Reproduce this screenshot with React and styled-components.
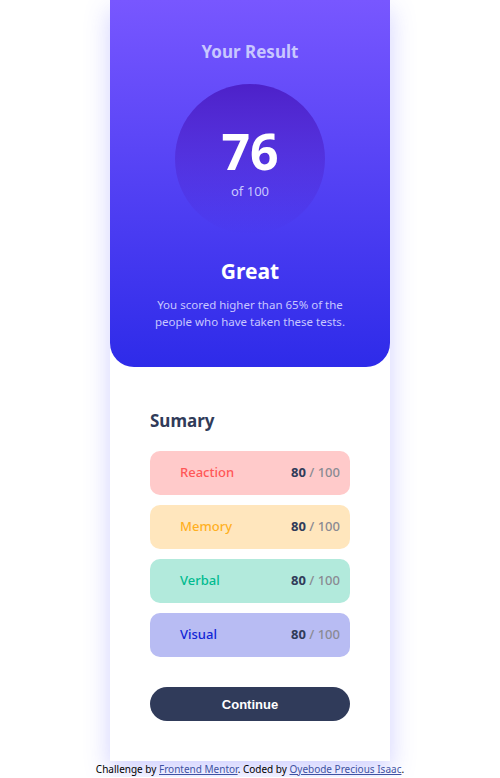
import styled, { createGlobalStyle } from 'styled-components';

const Global = createGlobalStyle`
  body {
    margin: 0;
    background: #fff;
    font-family: 'Noto Sans', 'Open Sans', sans-serif;
  }
`;

const Card = styled.main`
  width: 280px;
  margin: 0 auto;
  background: #fff;
  box-shadow: 0 10px 24px rgba(90, 90, 255, 0.28);
  padding-bottom: 40px;
`;

const Result = styled.section`
  height: 367px;
  box-sizing: border-box;
  padding-top: 38px;
  background: linear-gradient(180deg, #7857ff 0%, #2e2be9 100%);
  border-radius: 0 0 24px 24px;
  display: flex;
  flex-direction: column;
  align-items: center;
  color: #fff;
`;

const ResultTitle = styled.h1`
  margin: 0;
  font-size: 17px;
  font-weight: 700;
  line-height: 28px;
  color: #c8c7ff;
`;

const Circle = styled.div`
  width: 150px;
  height: 150px;
  margin-top: 18px;
  border-radius: 50%;
  background: linear-gradient(180deg, rgba(77, 33, 201, 1) 0%, rgba(37, 33, 201, 0) 100%);
  display: flex;
  flex-direction: column;
  align-items: center;
  justify-content: center;
`;

const Score = styled.div`
  font-size: 50px;
  font-weight: 700;
  line-height: 50px;
  margin-top: 8px;
`;

const OutOf = styled.div`
  font-size: 13px;
  line-height: 18px;
  margin-top: 6px;
  color: #c8c7ff;
`;

const Grade = styled.h2`
  margin: 22px 0 0;
  font-size: 21px;
  font-weight: 700;
  line-height: 30px;
`;

const Blurb = styled.p`
  margin: 10px 0 0;
  width: 200px;
  text-align: center;
  font-size: 11.5px;
  line-height: 17px;
  color: #c8c7ff;
`;

const Summary = styled.section`
  padding: 40px 40px 0;
  display: flex;
  flex-direction: column;
`;

const SummaryTitle = styled.h3`
  margin: 0 0 16px;
  font-size: 17px;
  font-weight: 700;
  line-height: 28px;
  color: #303b59;
`;

const List = styled.div`
  display: flex;
  flex-direction: column;
  gap: 10px;
`;

const Row = styled.div`
  height: 44px;
  box-sizing: border-box;
  padding: 0 10px 2px 30px;
  border-radius: 10px;
  background: ${(p) => p.$bg};
  display: flex;
  align-items: center;
  justify-content: space-between;
  font-size: 13px;
`;

const Label = styled.span`
  color: ${(p) => p.$color};
  font-weight: 500;
`;

const Value = styled.span`
  color: #8a8a93;
  font-weight: 500;
  b {
    color: #303b59;
    font-weight: 700;
  }
`;

const Button = styled.button`
  margin-top: 30px;
  height: 34px;
  border: none;
  border-radius: 17px;
  background: #303b5a;
  color: #fff;
  font-family: 'Liberation Sans', Arial, sans-serif;
  font-size: 13px;
  font-weight: 700;
  cursor: pointer;
`;

const Footer = styled.footer`
  text-align: center;
  font-size: 10px;
  line-height: 16px;
  color: #000;
  a {
    color: #3e52a3;
  }
`;

const items = [
  { name: 'Reaction', bg: '#ffcaca', color: '#ff5757' },
  { name: 'Memory', bg: '#ffe6bd', color: '#ffb01f' },
  { name: 'Verbal', bg: '#b2eadc', color: '#00bb8f' },
  { name: 'Visual', bg: '#b8bcf3', color: '#1125d6' },
];

export default function App() {
  return (
    <>
      <Global />
      <Card>
        <Result>
          <ResultTitle>Your Result</ResultTitle>
          <Circle>
            <Score>76</Score>
            <OutOf>of 100</OutOf>
          </Circle>
          <Grade>Great</Grade>
          <Blurb>You scored higher than 65% of the people who have taken these tests.</Blurb>
        </Result>
        <Summary>
          <SummaryTitle>Sumary</SummaryTitle>
          <List>
            {items.map((item) => (
              <Row key={item.name} $bg={item.bg}>
                <Label $color={item.color}>{item.name}</Label>
                <Value>
                  <b>80</b> / 100
                </Value>
              </Row>
            ))}
          </List>
          <Button>Continue</Button>
        </Summary>
      </Card>
      <Footer>
        Challenge by <a href="#">Frontend Mentor</a>. Coded by <a href="#">Oyebode Precious Isaac</a>.
      </Footer>
    </>
  );
}
